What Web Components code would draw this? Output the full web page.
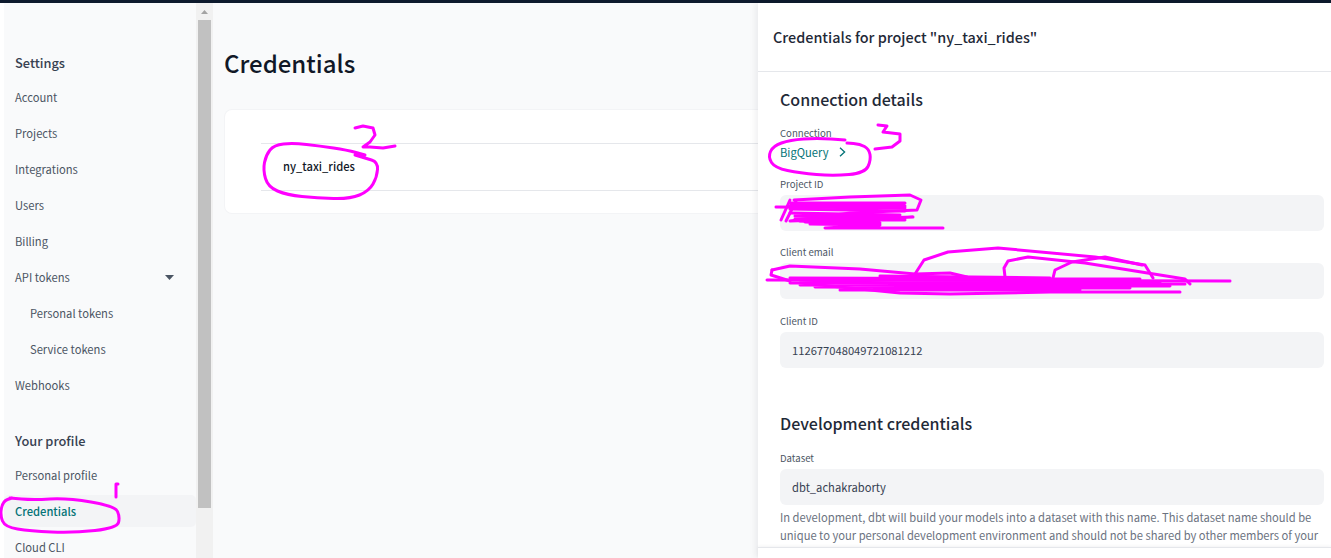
<!DOCTYPE html>
<html>
<head>
<meta charset="utf-8">
<title>Credentials</title>
<style>
    html, body { margin: 0; height: 100%; overflow: hidden; background: #fff; }
    body { font-family: "Noto Sans CJK SC", "Noto Sans", sans-serif; color: #1f2937; }
</style>
</head>
<body>
<app-shell>
    <settings-sidebar slot="sidebar">
        <nav-heading>Settings</nav-heading>
        <nav-item>Account</nav-item>
        <nav-item>Projects</nav-item>
        <nav-item>Integrations</nav-item>
        <nav-item>Users</nav-item>
        <nav-item>Billing</nav-item>
        <nav-item caret>API tokens</nav-item>
        <nav-item sub>Personal tokens</nav-item>
        <nav-item sub>Service tokens</nav-item>
        <nav-item>Webhooks</nav-item>
        <nav-heading second>Your profile</nav-heading>
        <nav-item>Personal profile</nav-item>
        <nav-item active>Credentials</nav-item>
        <nav-item>Cloud CLI</nav-item>
    </settings-sidebar>
    <fake-scrollbar slot="sidebar"></fake-scrollbar>
    <credentials-page slot="main" heading="Credentials">
        <project-row>ny_taxi_rides</project-row>
    </credentials-page>
    <side-panel slot="panel" heading='Credentials for project "ny_taxi_rides"'>
        <panel-section heading="Connection details">
            <field-row label="Connection" kind="link"><link-value>BigQuery</link-value></field-row>
            <field-row label="Project ID" kind="input"></field-row>
            <field-row label="Client email" kind="input" style="margin-bottom: 13px"></field-row>
            <field-row label="Client ID" kind="input">112677048049721081212</field-row>
        </panel-section>
        <panel-section heading="Development credentials" second>
            <field-row label="Dataset" kind="input" help="In development, dbt will build your models into a dataset with this name. This dataset name should be unique to your personal development environment and should not be shared by other members of your">dbt_achakraborty</field-row>
        </panel-section>
    </side-panel>
</app-shell>
<ink-marks></ink-marks>

<script>
    const define = (name, css, html, setup) => {
        customElements.define(name, class extends HTMLElement {
            constructor() {
                super();
                this.attachShadow({ mode: 'open' });
                this.shadowRoot.innerHTML = `<style>${css}</style>${html}`;
            }

            connectedCallback() {
                if (setup) setup(this, this.shadowRoot);
            }
        });
    };

    define('app-shell', `
        :host { display: flex; flex-direction: column; height: 558px; overflow: hidden; }
        .top { height: 3px; flex: none; background: #0d1a2d; }
        .body { flex: 1; min-height: 0; display: flex; padding-left: 4px; }
        .side { flex: none; display: flex; width: 209px; }
        .main { flex: 1; min-width: 0; background: #f9fafb; overflow: hidden; }
        .panel { flex: none; width: 573px; }
    `, `
        <div class="top"></div>
        <div class="body">
            <div class="side"><slot name="sidebar"></slot></div>
            <div class="main"><slot name="main"></slot></div>
            <div class="panel"><slot name="panel"></slot></div>
        </div>
    `);

    define('settings-sidebar', `
        :host { display: block; width: 192px; flex: none; height: 555px; overflow: hidden; background: #f9fafb; padding-top: 48px; box-sizing: border-box; }
    `, `<slot></slot>`);

    define('nav-heading', `
        :host { display: block; height: 24px; line-height: 24px; padding-left: 11px; margin-bottom: 6px; font-size: 12.8px; font-weight: 500; color: #374151; }
        :host([second]) { margin-top: 28px; }
    `, `<slot></slot>`);

    define('nav-item', `
        :host { display: flex; align-items: center; justify-content: space-between; height: 32px; margin-bottom: 4px; padding: 0 22px 0 11px; border-radius: 5px; font-size: 11.2px; color: #4b5563; }
        :host([sub]) { padding-left: 26px; }
        :host([active]) { background: #f3f4f6; color: #047377; font-weight: 500; }
        svg { display: none; width: 9px; height: 5px; }
        :host([caret]) svg { display: block; }
    `, `<span><slot></slot></span><svg viewBox="0 0 9 5"><path d="M0 0h9L4.5 5z" fill="#4b5563"/></svg>`);

    define('fake-scrollbar', `
        :host { display: block; width: 17px; flex: none; height: 555px; background: #f1f1f1; }
        .up { height: 17px; display: flex; align-items: center; justify-content: center; }
        .thumb { width: 13px; margin-left: 2px; height: 488px; background: #c1c1c1; }
        svg { width: 7px; height: 4px; }
    `, `
        <div class="up"><svg viewBox="0 0 7 4"><path d="M3.5 0L7 4H0z" fill="#a3a3a3"/></svg></div>
        <div class="thumb"></div>
    `);

    define('credentials-page', `
        :host { display: block; padding: 40px 0 0 11px; }
        h1 { margin: 0 0 27px; font-size: 24px; line-height: 40px; font-weight: 500; color: #111827; }
        .card { width: 700px; height: 103px; box-sizing: border-box; margin-left: 1px; padding: 33px 0 0 36px; background: #fff; border-radius: 7px; box-shadow: 0 0 0 1px #f3f4f6; }
    `, `
        <h1></h1>
        <div class="card"><slot></slot></div>
    `, (el, root) => {
        root.querySelector('h1').textContent = el.getAttribute('heading');
    });

    define('project-row', `
        :host { display: block; height: 46px; line-height: 44px; box-sizing: content-box; padding-left: 22px; border-top: 1px solid #e5e7eb; border-bottom: 1px solid #e5e7eb; font-size: 11.2px; font-weight: 500; color: #111827; }
    `, `<slot></slot>`);

    define('side-panel', `
        :host { display: flex; flex-direction: column; height: 555px; background: #fff; box-shadow: -3px 0 6px rgba(17, 24, 39, 0.06); position: relative; }
        header { flex: none; height: 69px; box-sizing: border-box; padding-left: 15px; padding-bottom: 2px; display: flex; align-items: center; border-bottom: 1px solid #e5e7eb; font-size: 14.4px; font-weight: 500; color: #1f2937; }
        .scroll { flex: 1; min-height: 0; overflow: hidden; padding: 0 7px 0 22px; }
        footer { flex: none; height: 10px; border-top: 1px solid #e5e7eb; box-shadow: 0 -1px 3px rgba(17, 24, 39, 0.05); background: #fff; position: relative; }
    `, `
        <header></header>
        <div class="scroll"><slot></slot></div>
        <footer></footer>
    `, (el, root) => {
        root.querySelector('header').textContent = el.getAttribute('heading');
    });

    define('panel-section', `
        :host { display: block; padding-top: 14px; }
        :host([second]) { padding-top: 30px; }
        h2 { margin: 0 0 12px; font-size: 16px; line-height: 26px; font-weight: 500; color: #1f2937; }
        :host([second]) h2 { margin-bottom: 13px; }
    `, `
        <h2></h2>
        <slot></slot>
    `, (el, root) => {
        root.querySelector('h2').textContent = el.getAttribute('heading');
    });

    define('field-row', `
        :host { display: block; margin-bottom: 12px; }
        label { display: block; height: 16px; line-height: 18px; margin-bottom: 4px; font-size: 9.6px; color: #4b5563; }
        .value { font-size: 11.2px; color: #374151; }
        :host([kind=input]) .value { height: 36px; line-height: 36px; padding-left: 12px; border-radius: 6px; background: #f3f4f6; }
        :host([kind=link]) { margin-bottom: 11px; }
        :host([kind=link]) label { margin-bottom: 1px; height: 15px; }
        :host([kind=link]) .value { height: 24px; }
        p { margin: 3px 0 0; font-size: 11.2px; line-height: 18px; color: #6b7280; }
    `, `
        <label></label>
        <div class="value"><slot></slot></div>
        <p></p>
    `, (el, root) => {
        root.querySelector('label').textContent = el.getAttribute('label');
        const help = el.getAttribute('help');
        if (help) root.querySelector('p').textContent = help;
        else root.querySelector('p').remove();
    });

    define('link-value', `
        :host { display: flex; align-items: center; gap: 10px; height: 24px; color: #047377; font-size: 11.2px; }
        svg { width: 7px; height: 10px; }
    `, `<slot></slot><svg viewBox="0 0 7 10"><path d="M1 .8L5.6 5 1 9.2" fill="none" stroke="#047377" stroke-width="1.3"/></svg>`);

    // hand drawn rings go through the midpoints, so the pen line stays round
    const ring = pts => {
        const mid = (a, b) => `${(a[0] + b[0]) / 2} ${(a[1] + b[1]) / 2}`;
        let d = `M${pts[0].join(' ')}L${mid(pts[0], pts[1])}`;
        for (let i = 1; i < pts.length - 1; i++) {
            d += `Q${pts[i].join(' ')} ${mid(pts[i], pts[i + 1])}`;
        }
        return `${d}L${pts[pts.length - 1].join(' ')}`;
    };

    const marks = [
        // the "2" and the ring round the project
        'M355 128L363 126L373 128L375 135L370 142L363 147L370 147L383 148L395 146',
        ring([[365, 155], [347, 150], [320, 146], [293, 143], [274, 145], [266, 155], [263, 170], [268, 187], [287, 195], [317, 198], [350, 199], [369, 191], [377, 177], [378, 162], [365, 158], [355, 155]]),
        // ring round Credentials in the sidebar, and the tick above it
        ring([[10, 498], [33, 500], [67, 498], [115, 506], [120, 517], [117, 528], [73, 533], [30, 531], [5, 527], [0, 515], [3, 501], [12, 498]]),
        'M116 497L116 484L118 484',
        // the "3" and the ring round BigQuery
        'M878 125L887 126L883 132L900 134L900 141L892 147L875 149',
        ring([[845, 140], [817, 138], [790, 140], [773, 146], [768, 157], [775, 168], [800, 173], [833, 176], [865, 173], [871, 160], [869, 149], [860, 144], [847, 143]]),
        // project id scribble
        'M776 207L905 208',
        'M794 200L850 197L910 195L921 200L917 210L850 213L790 221L913 217L805 222L880 225L825 228L943 228',
        'M790 200L781 220M796 201L786 221',
        'M790 203L905 203M790 206L905 206M790 209L905 211M790 213L900 215M795 216L905 218M795 219L905 220M800 221L880 223M810 224L870 225',
        // client email scribble
        'M767 280L1230 281',
        'M772 270L790 266L860 269L915 274L950 273L967 277L800 283L850 288L900 293L950 294L1050 292L1180 292',
        'M772 270L771 275L790 281',
        'M915 274L924 260L948 252L998 248L1095 257L1145 265L1153 278',
        'M1005 277L1004 268L1008 261L1028 257L1085 263L1185 279L1190 284',
        'M1053 278L1055 270L1072 262L1105 257L1142 265',
        'M790 278L1140 279M790 283L1185 284M800 285L1170 286M815 287L1130 288M840 290L1080 290M830 283L1160 282M880 276L1050 278',
    ];

    define('ink-marks', `
        :host { display: block; position: absolute; top: 0; left: 0; width: 1331px; height: 558px; pointer-events: none; }
        svg { display: block; }
        path { fill: none; stroke: #ff00ff; stroke-width: 3; stroke-linejoin: round; stroke-linecap: round; }
    `, `<svg width="1331" height="558" viewBox="0 0 1331 558">${marks.map(d => `<path d="${d}"/>`).join('')}</svg>`);
</script>
</body>
</html>
